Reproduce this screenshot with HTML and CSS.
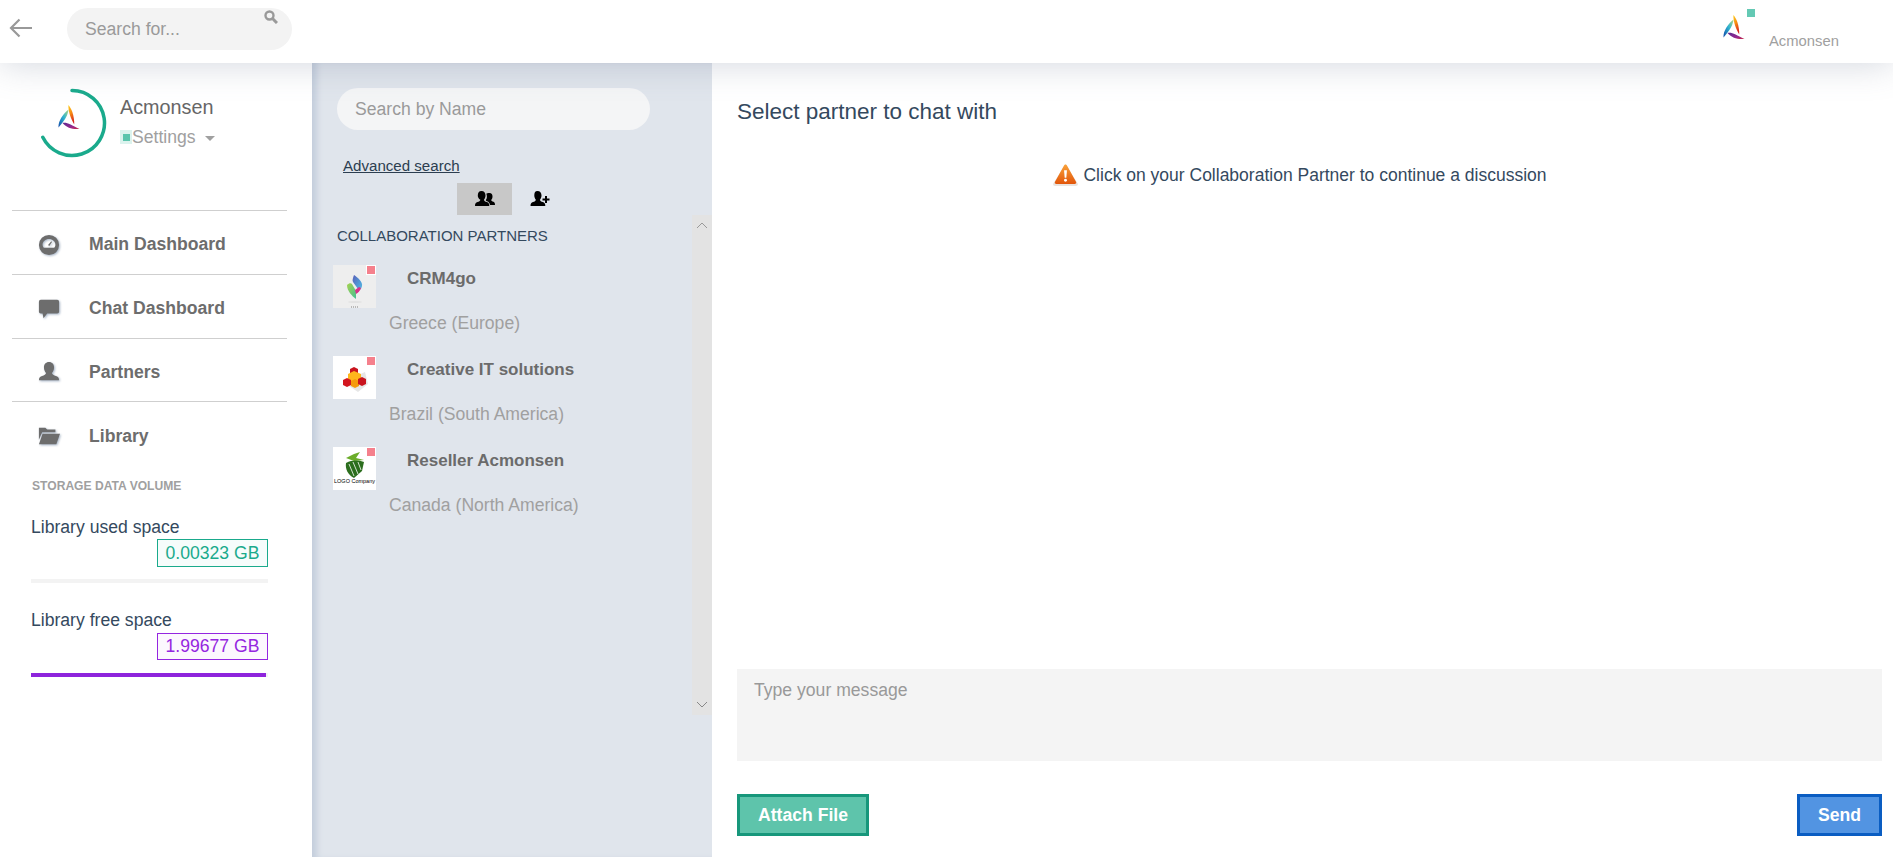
FILE: index.html
```html
<!DOCTYPE html>
<html lang="en">
<head>
<meta charset="utf-8">
<title>Chat</title>
<link rel="stylesheet" href="styles.css">
</head>
<body>
<svg class="defs" width="0" height="0" aria-hidden="true">
  <defs>
    <linearGradient id="gOrange" x1="0" y1="0" x2="0.3" y2="1"><stop offset="0" stop-color="#ffd21f"/><stop offset=".5" stop-color="#f78a12"/><stop offset="1" stop-color="#d8261c"/></linearGradient>
    <linearGradient id="gBlue" x1="1" y1="0" x2="0" y2="1"><stop offset="0" stop-color="#b5d77a"/><stop offset=".45" stop-color="#2fb4d0"/><stop offset="1" stop-color="#1148a8"/></linearGradient>
    <linearGradient id="gPurple" x1="0" y1="0" x2="1" y2="1"><stop offset="0" stop-color="#5a2a90"/><stop offset=".6" stop-color="#96288f"/><stop offset="1" stop-color="#c9283f"/></linearGradient>
    <linearGradient id="gCrmBlue" x1="0" y1="0" x2="1" y2="1"><stop offset="0" stop-color="#5a5fb8"/><stop offset=".6" stop-color="#4f9bd8"/><stop offset="1" stop-color="#62bfe0"/></linearGradient>
    <linearGradient id="gCrmGreen" x1="0" y1="0" x2="1" y2="1"><stop offset="0" stop-color="#a6d24e"/><stop offset="1" stop-color="#44bf94"/></linearGradient>
    <symbol id="brand" viewBox="0 0 22 25">
      <path fill="url(#gOrange)" d="M10.3 0C14 4 16 10 16.3 19.5 13 14 10.5 8 10.3 0Z"/>
      <path fill="url(#gBlue)" d="M10.5 4.5C10 10 7 15 .5 22.5 0 16 5 9 10.5 4.5Z"/>
      <path fill="url(#gPurple)" d="M4.5 18C9 17 13 20 21.5 24 14 24.5 9 23 4.5 18Z"/>
    </symbol>
  </defs>
</svg>

<header class="topbar">
  <svg class="back" viewBox="0 0 24 20"><path d="M23 10H2M10.500 1.500 2 10l8.500 8.500" fill="none" stroke="#999" stroke-width="2.200"/></svg>
  <div class="top-search">
    <span class="top-search-text">Search for...</span>
    <svg class="top-search-icon" viewBox="0 0 14 14"><circle cx="5.500" cy="5.500" r="4" fill="none" stroke="#999" stroke-width="2.400"/><path d="M8.500 8.500 13 13" stroke="#999" stroke-width="3"/></svg>
  </div>
  <div class="top-user">
    <svg class="top-logo"><use href="#brand"/></svg>
    <span class="top-dot"></span>
    <span class="top-name">Acmonsen</span>
  </div>
</header>

<div class="layout">
  <aside class="sidebar">
    <div class="profile">
      <div class="avatar">
        <svg class="ring" viewBox="0 0 70 70"><path d="M35 2.500A32.500 32.500 0 1 1 5.800 49.300" fill="none" stroke="#1aaa8c" stroke-width="3.500" stroke-linecap="round"/></svg>
        <svg class="avatar-logo"><use href="#brand"/></svg>
      </div>
      <div class="profile-text">
        <div class="profile-name">Acmonsen</div>
        <div class="profile-settings"><span class="online"><i></i></span>Settings<span class="caret"></span></div>
      </div>
    </div>
    <nav class="nav">
      <a class="nav-row"><svg class="nav-icon" viewBox="0 0 24 24"><path fill-rule="evenodd" d="M12 1a11 11 0 1 0 0 22 11 11 0 0 0 0-22Zm0 4.500c4 0 7 2.800 7 6.300 0 1.400-.6 2.500-1.400 3.200H6.400C5.600 14.300 5 13.200 5 11.800c0-3.500 3-6.300 7-6.300Z"/><path d="m11 12 3.500-4 .8.600-3 4.500Z"/></svg><span>Main Dashboard</span></a>
      <a class="nav-row"><svg class="nav-icon" viewBox="0 0 24 24"><path d="M3 2h18a2 2 0 0 1 2 2v11a2 2 0 0 1-2 2H10l-4 5-1-5H3a2 2 0 0 1-2-2V4a2 2 0 0 1 2-2Z"/></svg><span>Chat Dashboard</span></a>
      <a class="nav-row"><svg class="nav-icon" viewBox="0 0 24 24"><path d="M12 1c3.500 0 5.500 2.500 5.500 6 0 2.500-1 4.500-2.300 6 .3 1.800 2 2.500 4.300 3.300 2 .7 3.500 1.700 3.500 4.700H1c0-3 1.500-4 3.500-4.700 2.300-.8 4-1.500 4.300-3.300C7.500 11.500 6.500 9.500 6.500 7c0-3.500 2-6 5.500-6Z"/></svg><span>Partners</span></a>
      <a class="nav-row"><svg class="nav-icon" viewBox="0 0 24 24"><path d="M1 3h7l2 2h9v3H4.500L1 16Z"/><path d="M5 9.500h19L20 21H1Z"/></svg><span>Library</span></a>
    </nav>
    <section class="storage">
      <h2 class="storage-title">STORAGE DATA VOLUME</h2>
      <div class="meter">
        <div class="meter-label">Library used space</div>
        <div class="meter-value-row"><span class="meter-value used">0.00323 GB</span></div>
        <div class="meter-track"></div>
      </div>
      <div class="meter">
        <div class="meter-label">Library free space</div>
        <div class="meter-value-row"><span class="meter-value free">1.99677 GB</span></div>
        <div class="meter-track"><div class="meter-fill" style="width:99.2%"></div></div>
      </div>
    </section>
  </aside>

  <section class="partners">
    <div class="name-search">Search by Name</div>
    <a class="advanced">Advanced search</a>
    <div class="tabs">
      <span class="tab active"><svg class="tab-icon" viewBox="0 0 20 18"><path d="M14.500 3c2.100 0 3 1.500 3 3.400 0 1.400-.5 2.600-1.300 3.500.2 1 1 1.400 2.100 1.800 1 .4 1.700 1 1.700 3.300h-5c-.2-1.900-1.300-3-2.900-3.700-.9-.4-1.300-.7-1.300-1.200.8-1.100 1.100-2.500 1.100-3.700 0-1.100-.2-2-.6-2.700.6-.5 1.400-.7 3.200-.7Z"/><path d="M6.500 1c2.600 0 4 1.900 4 4.500 0 1.700-.7 3.200-1.600 4.300.2 1.300 1.400 1.800 2.900 2.300 1.600.6 2.500 1.300 2.500 3.900H0c0-2.600.9-3.300 2.500-3.900 1.500-.5 2.700-1 2.900-2.300C3.500 8.700 2.800 7.200 2.800 5.500 2.800 2.900 3.900 1 6.500 1Z"/></svg></span>
      <span class="tab"><svg class="tab-icon" viewBox="0 0 20 18"><path d="M7.500 1c2.600 0 4 1.900 4 4.500 0 1.700-.7 3.200-1.600 4.300.2 1.300 1.400 1.800 2.900 2.300 1.600.6 2.500 1.300 2.500 3.900H.5c0-2.600.9-3.300 2.500-3.900 1.500-.5 2.700-1 2.900-2.300C5 8.700 4.300 7.200 4.300 5.500 4.300 2.900 4.900 1 7.500 1Z"/><path d="M15 6h2v2.500h2.500v2H17V13h-2v-2.500h-2.500v-2H15Z"/></svg></span>
    </div>
    <div class="scrollarea">
      <div class="list">
        <h2 class="list-title">COLLABORATION PARTNERS</h2>
        <article class="item">
          <div class="item-head">
            <div class="thumb grey">
              <svg viewBox="0 0 43 43"><path fill="url(#gCrmBlue)" d="M21 10c-1 3-2 5-1 7l5 7-1 3c4-2 5.500-5 5-8-1-4-5-7-8-9Z"/><path fill="url(#gCrmGreen)" d="M14 20c2-2 4-2 5-1l4 7v8c-4-3-9-8-9-14Z"/><path fill="#d8318a" d="M22 25l4-3 2 1c-1 3-3 5-5 6Z"/><ellipse cx="22" cy="37" rx="7" ry="1" fill="#e2e2e2"/><path stroke="#555" stroke-width=".7" stroke-dasharray="1 1" d="M18 42h7"/></svg>
              <span class="status"></span>
            </div>
            <span class="item-name">CRM4go</span>
          </div>
          <div class="item-place">Greece (Europe)</div>
        </article>
        <article class="item">
          <div class="item-head">
            <div class="thumb">
              <svg viewBox="0 0 43 43"><path fill="#e6e6e6" d="M10 26l22-10 3 12-10 8Z"/><path fill="#c9141e" d="M17 13l4-2 4 2v4l-4 2-4-2Z"/><path fill="#ffb51c" d="M15 18l6-3 7 3v6l-7 3-6-3Z"/><path fill="#f59a0c" d="M18 25l4-2 4 2v5l-4 2-4-2Z"/><path fill="#d3161f" d="M10 24l4-2 4 2v5l-4 2-4-2Z"/><path fill="#c9141e" d="M25 23l4-2 4 2v5l-4 2-4-2Z"/></svg>
              <span class="status"></span>
            </div>
            <span class="item-name">Creative IT solutions</span>
          </div>
          <div class="item-place">Brazil (South America)</div>
        </article>
        <article class="item">
          <div class="item-head">
            <div class="thumb">
              <svg viewBox="0 0 43 43"><path fill="#6bad2a" d="M13 11l8-4 6-2-4 6 8 2-10 1Z"/><path fill="#2c6e1e" d="M13 16c6-3 12-3 18-1l-2 9-8 7c-6-3-9-9-8-15Z"/><path stroke="#fff" stroke-width=".8" fill="none" d="M16 17l5 12M20 15l5 12M25 15l3 8"/><text class="logo-text" x="21.500" y="35.500" text-anchor="middle">LOGO Company</text></svg>
              <span class="status"></span>
            </div>
            <span class="item-name">Reseller Acmonsen</span>
          </div>
          <div class="item-place">Canada (North America)</div>
        </article>
      </div>
      <div class="scrollbar">
        <svg class="arrow" viewBox="0 0 12 7"><path d="M1 6l5-5 5 5" fill="none" stroke="#999"/></svg>
        <svg class="arrow" viewBox="0 0 12 7"><path d="M1 1l5 5 5-5" fill="none" stroke="#888"/></svg>
      </div>
    </div>
  </section>

  <main class="chat">
    <h1 class="chat-title">Select partner to chat with</h1>
    <div class="notice">
      <svg class="warn" viewBox="0 0 24 22"><defs><linearGradient id="gWarn" x1="0" y1="0" x2="0" y2="1"><stop offset="0" stop-color="#f9a23a"/><stop offset="1" stop-color="#e2560a"/></linearGradient></defs><path fill="#e9e3de" d="M12 1 24 20a2 2 0 0 1-2 2H2a2 2 0 0 1-2-2Z"/><path fill="url(#gWarn)" d="M12 1.500a1.600 1.600 0 0 1 1.400.9l8.800 15.800a1.300 1.300 0 0 1-1.100 1.800H2.900a1.300 1.300 0 0 1-1.100-1.800l8.800-15.800a1.600 1.600 0 0 1 1.400-.9Z"/><path fill="#fff" d="M10.600 7h2.800l-.6 7h-1.600Z"/><circle cx="12" cy="16.500" r="1.400" fill="#fff"/></svg>
      <span>Click on your Collaboration Partner to continue a discussion</span>
    </div>
    <div class="messages"></div>
    <div class="composer">Type your message</div>
    <div class="actions">
      <button class="btn attach" type="button">Attach File</button>
      <button class="btn send" type="button">Send</button>
    </div>
  </main>
</div>
</body>
</html>
```
FILE: styles.css
```css
* { box-sizing: border-box; }
html, body { margin: 0; height: 100%; }
body {
  width: 1893px;
  height: 857px;
  overflow: hidden;
  background: #fff;
  font-family: "Liberation Sans", Arial, sans-serif;
  font-size: 17.6px;
  color: #34495e;
  display: flex;
  flex-direction: column;
}
.defs { position: absolute; }

/* top bar */
.topbar {
  height: 63px;
  flex: none;
  display: flex;
  align-items: flex-start;
  background: #fff;
  box-shadow: 0 0 36px rgba(110, 122, 145, .32);
  position: relative;
  z-index: 2;
}
.back { width: 24px; height: 20px; margin: 18px 0 0 9px; flex: none; }
.top-search {
  width: 225px;
  height: 42px;
  margin: 8px 0 0 34px;
  border-radius: 21px;
  background: #f3f3f3;
  display: flex;
  justify-content: space-between;
  padding-left: 18px;
}
.top-search-text { font-size: 17.6px; line-height: 42px; color: #9a9a9a; }
.top-search-icon { width: 14px; height: 14px; margin: 2px 14px 0 0; }
.top-user { margin-left: auto; width: 170px; height: 63px; position: relative; display: flex; }
.top-logo { width: 22px; height: 25px; margin: 15px 0 0 0; flex: none; }
.top-dot { width: 8px; height: 8px; margin: 9px 0 0 2px; background: #64c9b4; flex: none; }
.top-name { font-size: 14.800px; color: #a0a0a0; margin: 32px 0 0 14px; line-height: 18px; }

/* columns */
.layout { flex: 1; display: flex; min-height: 0; }

.sidebar { width: 312px; flex: none; background: #fff; }
.profile { display: flex; height: 147px; padding: 25px 0 0 37px; }
.avatar { width: 70px; height: 70px; position: relative; flex: none; }
.ring { width: 70px; height: 70px; display: block; }
.avatar-logo { position: absolute; left: 21px; top: 17px; width: 22px; height: 25px; }
.profile-text { margin-left: 13px; padding-top: 7px; }
.profile-name { font-size: 19.800px; color: #666; line-height: 24px; }
.profile-settings { display: flex; align-items: center; color: #a0a0a0; line-height: 22px; margin-top: 7px; }
.online { width: 12px; height: 14px; background: #dcf3ee; display: flex; align-items: center; justify-content: center; }
.online i { width: 7px; height: 7px; background: #5cc5ad; display: block; }
.caret { margin: 3px 0 0 9px; border: 5px solid transparent; border-top-color: #a0a0a0; border-bottom-width: 0; }

.nav { margin: 0 25px 0 12px; }
.nav-row {
  height: 63.800px;
  display: flex;
  align-items: center;
  border-top: 1px solid #cfcfcf;
  padding: 5px 0 0 26px;
  font-weight: 700;
  color: #6d6d6d;
}
.nav-icon {
  width: 22px;
  height: 22px;
  fill: #6d6d6d;
  margin: 0 29px 0 0;
  flex: none;
  filter: drop-shadow(1px 1px 1px rgba(60, 90, 130, .45));
}

.storage { padding: 11px 44px 0 31px; }
.storage-title { margin: 0 0 0 1px; font-size: 12.100px; font-weight: 700; color: #a0a0a0; line-height: 20px; }
.meter { margin-top: 20px; }
.meter + .meter { margin-top: 26px; }
.meter-label { line-height: 22px; }
.meter-value-row { display: flex; justify-content: flex-end; margin-top: 1px; }
.meter + .meter .meter-value-row { margin-top: 2px; }
.meter-value { width: 111px; height: 28px; border: 1px solid; text-align: center; line-height: 26px; }
.meter + .meter .meter-value { height: 27px; line-height: 25px; }
.meter-value.used { color: #1aaa8c; border-color: #1aaa8c; background: #f6fcfb; }
.meter-value.free { color: #9526e0; border-color: #9526e0; background: #fcf8fe; }
.meter-track { height: 4px; margin-top: 12px; background: #f3f3f3; }
.meter + .meter .meter-track { margin-top: 13px; }
.meter-fill { height: 4px; background: #8e24dc; }

/* partners column */
.partners {
  width: 400px;
  flex: none;
  background: #e0e5ec;
  box-shadow: inset 8px 0 6px -3px #c4cedc;
  padding-top: 25px;
  display: flex;
  flex-direction: column;
}
.name-search {
  width: 313px;
  height: 42px;
  margin-left: 25px;
  padding-left: 18px;
  border-radius: 21px;
  background: #f4f5f6;
  color: #9a9a9a;
  line-height: 42px;
}
.advanced { margin: 27px 0 0 31px; font-size: 15.100px; line-height: 18px; color: #2c3e50; text-decoration: underline; }
.tabs { display: flex; margin: 8px 0 0 145px; }
.tab { width: 55px; height: 32px; display: flex; align-items: center; justify-content: center; }
.tab.active { background: #c8c8c8; }
.tab-icon { width: 20px; height: 18px; fill: #000; }
.scrollarea { height: 500px; display: flex; }
.list { flex: 1; padding: 11px 0 0 21px; }
.list-title { margin: 0 0 0 4px; font-size: 15px; font-weight: 400; line-height: 20px; color: #34495e; }
.item { height: 91px; }
.list-title + .item { margin-top: 19px; }
.item-head { display: flex; }
.thumb { width: 43px; height: 43px; position: relative; background: #fff; flex: none; }
.thumb.grey { background: #eee; }
.thumb svg { width: 43px; height: 43px; display: block; }
.logo-text { font-family: "Liberation Sans", Arial, sans-serif; font-size: 5.500px; fill: #000; }
.status { position: absolute; right: 0; top: 0; width: 10px; height: 10px; background: #f5808c; border: 1px solid #fff; }
.item-name { margin: 4px 0 0 31px; font-size: 17px; font-weight: 700; color: #6b6b6b; line-height: 20px; }
.item-place { margin: 4px 0 0 56px; color: #a0a0a0; line-height: 22px; }
.scrollbar {
  width: 20px;
  flex: none;
  background: #e3e3e3;
  display: flex;
  flex-direction: column;
  justify-content: space-between;
  align-items: center;
  padding: 7px 0;
}
.arrow { width: 12px; height: 7px; display: block; }

/* chat column */
.chat { flex: 1; min-width: 0; padding: 36px 11px 21px 25px; display: flex; flex-direction: column; }
.chat-title { margin: 0; font-size: 22.500px; font-weight: 400; line-height: 26px; color: #34495e; }
.notice { display: flex; align-items: center; justify-content: center; margin-top: 38px; padding-right: 19px; font-size: 17.500px; line-height: 22px; color: #34495e; }
.warn { width: 25px; height: 23px; margin-right: 5px; }
.messages { flex: 1; }
.composer { height: 92px; flex: none; background: #f4f4f4; color: #999; padding: 10px 17px; line-height: 22px; }
.actions { display: flex; justify-content: space-between; margin-top: 33px; }
.btn { height: 42px; font-family: inherit; font-size: 17.600px; font-weight: 700; color: #fff; border: 3px solid; padding: 0; }
.attach { width: 132px; background: #5ec4ab; border-color: #17977b; }
.send { width: 85px; background: #5294e2; border-color: #0a5dc2; }
```
